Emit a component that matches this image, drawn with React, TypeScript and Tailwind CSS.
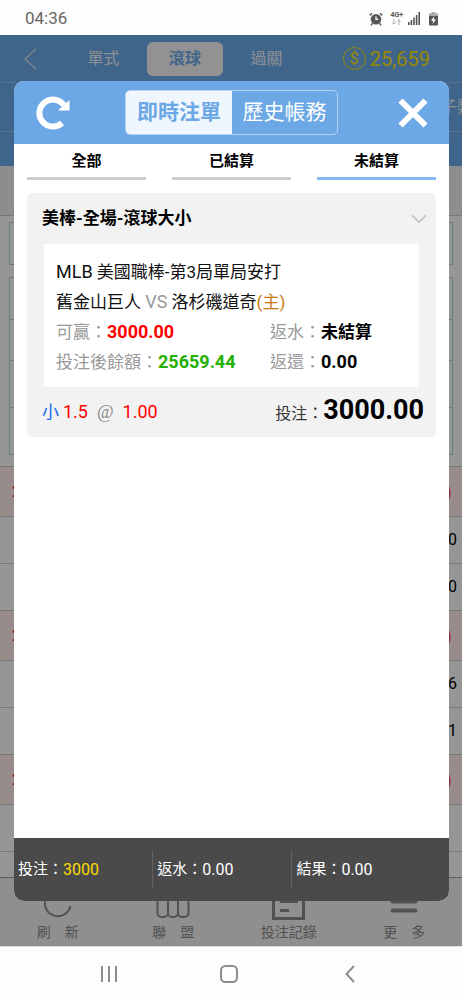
import { ReactNode } from "react";

function AlarmIcon() {
  return (
    <svg width="14" height="14" viewBox="0 0 14 14" fill="none" aria-hidden="true">
      <circle cx="7" cy="7.2" r="5.2" fill="#555" />
      <path d="M7 4.2v3.2h2.3" stroke="#fff" strokeWidth="1.3" />
      <path d="M.8 3.4 3 1.2M13.2 3.4 11 1.2M3.4 11.3 2 13.2M10.6 11.3l1.4 1.9" stroke="#555" strokeWidth="1.5" />
    </svg>
  );
}

function SignalIcon() {
  return (
    <svg width="12" height="13" viewBox="0 0 12 13" fill="#555" aria-hidden="true">
      <path d="M0 10h1.6v3H0zM2.6 8h1.6v5H2.6zM5.2 5.5h1.6V13H5.2zM7.8 3h1.6v10H7.8zM10.4 0H12v13h-1.6z" />
    </svg>
  );
}

function BatteryIcon() {
  return (
    <svg width="9" height="14" viewBox="0 0 9 14" aria-hidden="true">
      <path d="M2.5 0h4v1.6H9V4H0V1.6h2.5z" fill="#aaa" />
      <path d="M0 4h9v8.6a1 1 0 0 1-1 1H1a1 1 0 0 1-1-1z" fill="#555" />
      <path d="M5.2 4.2 2 8.8h2.1L3.6 12 7 7.6H4.8z" fill="#fff" />
    </svg>
  );
}

function StatusBar() {
  return (
    <header className="flex h-[35px] shrink-0 items-center justify-between bg-[#fdfdfd] pt-0.5 pr-6 pl-[25px] text-[#666]">
      <span className="text-[17px]">04:36</span>
      <div className="flex items-center">
        <AlarmIcon />
        <div className="ml-[7px] flex flex-col items-center">
          <span className="text-[7px] leading-[7px] font-bold text-[#555]">4G+</span>
          <svg width="9" height="6" viewBox="0 0 9 6" fill="none" stroke="#aaa" aria-hidden="true">
            <path d="M2 0v5M.3 3.5 2 5.2l1.7-1.7M7 6V.8M5.3 2.5 7 .8l1.7 1.7" />
          </svg>
        </div>
        <span className="ml-[5px]"><SignalIcon /></span>
        <span className="ml-[9px]"><BatteryIcon /></span>
      </div>
    </header>
  );
}

function SectionRow() {
  return (
    <div className="flex h-[50px] items-center justify-between border-t border-[#c8bcbc] bg-[#fde9e8] pr-[10px] pl-3 text-base text-[#e60012]">
      <span>2</span>
      <span className="text-xl text-[#f05060]">)</span>
    </div>
  );
}

function ValueRow({ value }: { value: string }) {
  return (
    <div className="flex h-[47px] items-center justify-end border-t border-[#c8c8c8] pr-[5px] text-base text-black">
      {value}
    </div>
  );
}

function TabItem({ label, icon }: { label: string; icon: ReactNode }) {
  return (
    <a href="#" className="flex flex-1 flex-col items-center text-sm leading-5 text-[#888]">
      <span className="flex h-11 items-end">{icon}</span>
      <span className="whitespace-pre">{label}</span>
    </a>
  );
}

function BackgroundPage() {
  return (
    <div className="flex flex-1 flex-col bg-[#fafafa]">
      <div className="flex h-[47px] items-center bg-[#6ca8e6] pr-8 pl-6 text-base text-[#e8eef5]">
        <button aria-label="返回" className="block">
          <svg width="13" height="22" viewBox="0 0 13 22" fill="none" stroke="#cfe0f3" strokeWidth="1.3">
            <path d="M12 .7 1 11l11 10.3" />
          </svg>
        </button>
        <nav className="ml-[34px] flex items-center">
          <a href="#" className="w-[65px] text-center">單式</a>
          <a href="#" className="ml-[11px] flex h-[34px] w-[76px] items-center justify-center rounded-md bg-[#f4f4f4] font-bold text-[#6ca8e6]">滾球</a>
          <a href="#" className="ml-[11px] w-[65px] text-center">過關</a>
        </nav>
        <div className="ml-auto flex items-center gap-1 text-xl text-[#fae500]">
          <span className="flex h-[23px] w-[23px] items-center justify-center rounded-full border border-[#fae500] text-base">$</span>
          25,659
        </div>
      </div>
      <div className="flex h-[49px] items-center justify-end overflow-hidden border-t border-[#8fbcea] bg-[#6ca8e6] pt-0.5">
        <span className="w-[22px] overflow-hidden text-[17px] whitespace-nowrap text-[#e8eef5]">子類</span>
      </div>
      <div className="h-[35px] border-t border-[#8fbcea] bg-[#6ca8e6]" />
      <div className="h-[50px] border-b border-[#c8c8c8] bg-[#ebebeb]" />
      <div className="px-[9px] pt-1.5 pb-[11px]">
        <div className="h-[43px] border border-[#a8cfc6]" />
        <div className="mt-3 border border-[#a8cfc6]">
          <div className="h-[41px]" />
          <div className="h-[41px] border-t border-[#a8cfc6]" />
          <div className="h-[47px] border-t border-[#c8c8c8]" />
          <div className="h-[47px] border-t border-[#c8c8c8]" />
        </div>
      </div>
      <SectionRow />
      <ValueRow value="0" />
      <ValueRow value="0" />
      <SectionRow />
      <ValueRow value="6" />
      <ValueRow value="1" />
      <SectionRow />
      <ValueRow value="" />
      <div className="flex-1 border-t border-[#c8c8c8]" />
      <nav className="flex h-[69px] shrink-0 border-t border-[#999] bg-[#eee]">
        <TabItem
          label="刷　新"
          icon={
            <svg width="28" height="36" viewBox="0 0 28 36" fill="none" stroke="#888" strokeWidth="2">
              <path d="M26.5 20A13 13 0 1 1 24 9" />
            </svg>
          }
        />
        <TabItem
          label="聯　盟"
          icon={
            <svg width="34" height="36" viewBox="0 0 34 36" fill="none" stroke="#888" strokeWidth="2">
              <rect x="1.5" y="4" width="10.5" height="27" rx="4" />
              <rect x="12" y="4" width="10" height="27" rx="4" />
              <rect x="22" y="4" width="10.5" height="27" rx="4" />
            </svg>
          }
        />
        <TabItem
          label="投注記錄"
          icon={
            <svg width="33" height="36" viewBox="0 0 33 36" fill="none" stroke="#888" strokeWidth="3">
              <path d="M1.5 1.5h30v31h-30z" />
              <path d="M8 15.5h18M8 24.5h9" />
            </svg>
          }
        />
        <TabItem
          label="更　多"
          icon={
            <svg width="28" height="36" viewBox="0 0 28 36" fill="none" stroke="#888" strokeWidth="4" strokeLinecap="round">
              <path d="M2.5 6.5h23M2.5 15.5h23M2.5 24.5h23" />
            </svg>
          }
        />
      </nav>
    </div>
  );
}

function FilterTab({ label, active = false }: { label: string; active?: boolean }) {
  return (
    <button
      className={
        active
          ? "h-9 border-b-[3px] border-[#84b8ee] pt-0.5 text-center text-[15px] font-bold text-black"
          : "h-9 border-b-[3px] border-[#ccc] pt-0.5 text-center text-[15px] font-bold text-black"
      }
    >
      {label}
    </button>
  );
}

function BetCard() {
  return (
    <article className="rounded-[5px] bg-[#f2f2f2] text-[17px]">
      <div className="flex h-[51px] items-center justify-between pr-[9px] pl-[15px]">
        <h2 className="font-bold text-black">美棒-全場-滾球大小</h2>
        <button aria-label="展開">
          <svg width="16" height="10" viewBox="0 0 16 10" fill="none" stroke="#c8c8c8" strokeWidth="2">
            <path d="m1 1.2 7 7 7-7" />
          </svg>
        </button>
      </div>
      <div className="mx-[17px] bg-white px-3 pt-[13px] pb-[10px] leading-[30px] text-[#111]">
        <p>
          <span className="text-lg leading-[30px]">MLB</span> 美國職棒-第3局單局安打
        </p>
        <p>
          舊金山巨人 <span className="text-lg leading-[30px] text-[#999]">VS</span> 洛杉磯道奇
          <span className="text-[#c87810]">(主)</span>
        </p>
        <dl className="grid grid-cols-[214px_1fr] text-[#999]">
          <div className="flex">
            <dt>可贏：</dt>
            <dd className="text-lg leading-[30px] font-bold text-[#f00]">3000.00</dd>
          </div>
          <div className="flex">
            <dt>返水：</dt>
            <dd className="font-bold text-black">未結算</dd>
          </div>
          <div className="flex">
            <dt>投注後餘額：</dt>
            <dd className="text-lg leading-[30px] font-bold text-[#23b000]">25659.44</dd>
          </div>
          <div className="flex">
            <dt>返還：</dt>
            <dd className="text-lg leading-[30px] font-bold text-black">0.00</dd>
          </div>
        </dl>
      </div>
      <div className="flex h-[50px] items-center justify-between pr-3 pl-[15px] text-[#f00]">
        <div className="flex items-baseline text-lg">
          <span className="text-[17px] text-[#1467f0]">小</span>
          <span className="ml-1">1.5</span>
          <span className="mx-[9px] font-['Liberation_Serif',serif] text-[#888]">@</span>
          <span>1.00</span>
        </div>
        <div className="flex items-baseline pb-1 text-base text-[#333]">
          投注：<strong className="text-[27px] leading-8 text-black">3000.00</strong>
        </div>
      </div>
    </article>
  );
}

function BetDialog() {
  return (
    <section
      role="dialog"
      aria-label="即時注單"
      className="absolute top-[46px] right-[13px] bottom-[45px] left-[14px] flex flex-col overflow-hidden rounded-[10px] bg-white"
    >
      <div className="flex h-[63px] shrink-0 items-center bg-[#6ba8e5] pr-[21px] pl-[22px]">
        <button aria-label="刷新">
          <svg width="34" height="34" viewBox="0 0 34 34" fill="none">
            <path d="M26 27A13.500 13.500 0 1 1 28 9.300" stroke="#fff" strokeWidth="6" />
            <path d="M33.500 4v10.500H22z" fill="#fff" />
          </svg>
        </button>
        <div className="ml-[55px] flex h-[45px] overflow-hidden rounded-[5px] border border-[#b5d3f2] text-[21px]">
          <button className="w-[106px] bg-[#eff6fd] font-bold text-[#6ba8e5]">即時注單</button>
          <button className="w-[105px] text-white">歷史帳務</button>
        </div>
        <button aria-label="關閉" className="ml-auto">
          <svg width="30" height="30" viewBox="0 0 30 30" fill="none" stroke="#fff" strokeWidth="6">
            <path d="m2.5 2.5 25 25M27.5 2.5l-25 25" />
          </svg>
        </button>
      </div>
      <div className="flex-1 px-[13px]">
        <div className="grid grid-cols-3 gap-[26px]">
          <FilterTab label="全部" />
          <FilterTab label="已結算" />
          <FilterTab label="未結算" active />
        </div>
        <div className="mt-[13px]">
          <BetCard />
        </div>
      </div>
      <footer className="flex h-[63px] shrink-0 items-center bg-[#4a4a4a] text-[15px] text-white">
        <p className="flex h-[38px] w-[32%] items-center border-r border-[#626262] pl-1">
          投注：<span className="text-base text-[#ffdc00]">3000</span>
        </p>
        <p className="flex h-[38px] w-[32%] items-center border-r border-[#626262] pl-1">
          返水：<span className="text-base">0.00</span>
        </p>
        <p className="flex h-[38px] flex-1 items-center pl-1">
          結果：<span className="text-base">0.00</span>
        </p>
      </footer>
    </section>
  );
}

function SystemNav() {
  return (
    <nav className="grid h-[54px] shrink-0 grid-cols-[1fr_18px_1fr] items-center border-t border-[#ddd] bg-[#fdfdfd] pr-1">
      <button aria-label="最近" className="mr-[103px] justify-self-end">
        <svg width="16" height="16" viewBox="0 0 16 16" stroke="#8c8c8c" strokeWidth="2">
          <path d="M1 0v16M8 0v16M15 0v16" />
        </svg>
      </button>
      <button aria-label="主畫面">
        <svg width="18" height="18" viewBox="0 0 18 18" fill="none" stroke="#8c8c8c" strokeWidth="2">
          <rect x="1" y="1" width="16" height="16" rx="4.5" />
        </svg>
      </button>
      <button aria-label="上一頁" className="ml-[107px] justify-self-start">
        <svg width="10" height="18" viewBox="0 0 10 18" fill="none" stroke="#8c8c8c" strokeWidth="2">
          <path d="M9 1 1.5 9 9 17" />
        </svg>
      </button>
    </nav>
  );
}

export default function App() {
  return (
    <div className="flex min-h-screen flex-col font-[Roboto,'Noto_Sans_CJK_TC',sans-serif]">
      <StatusBar />
      <main className="relative flex flex-1 flex-col">
        <BackgroundPage />
        <div className="absolute inset-0 bg-black/40" />
        <BetDialog />
      </main>
      <SystemNav />
    </div>
  );
}
